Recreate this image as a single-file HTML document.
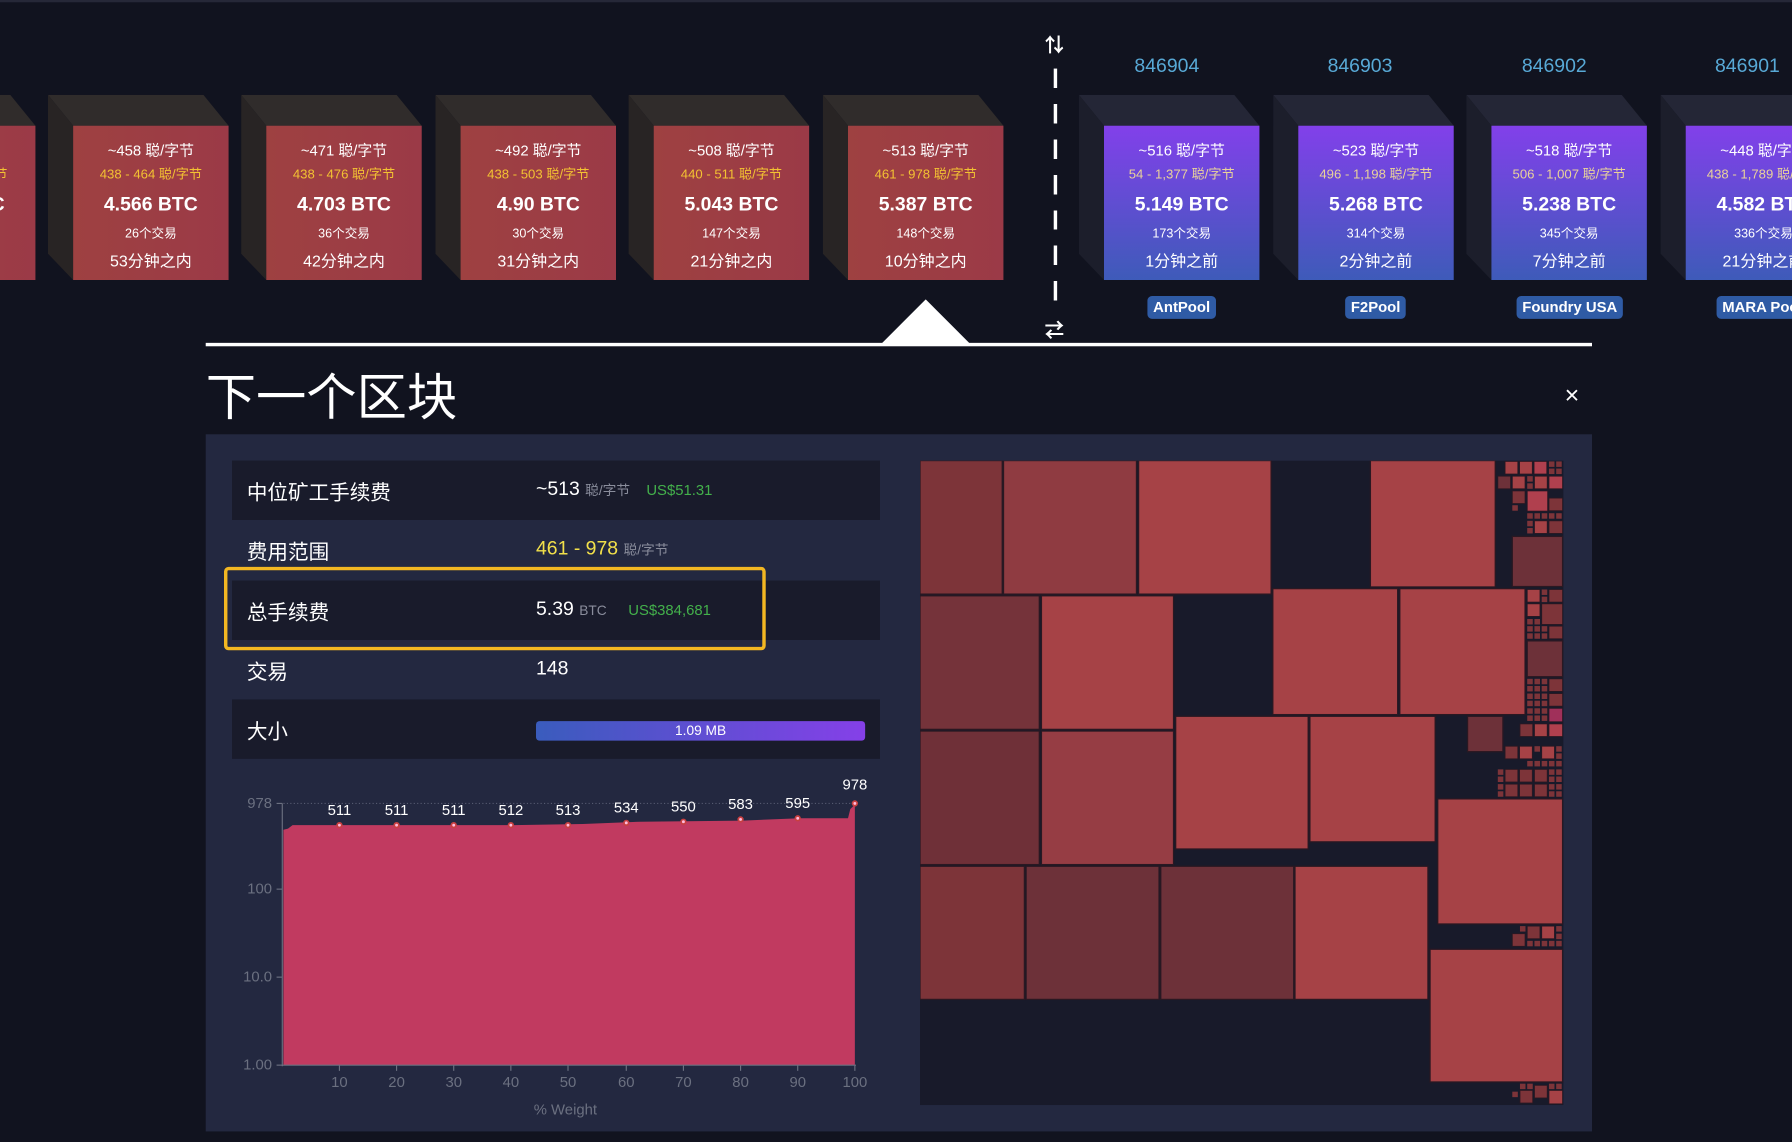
<!DOCTYPE html>
<html><head><meta charset="utf-8">
<style>
html,body{margin:0;padding:0;background:#11131f;overflow:hidden;width:1792px;height:1141px}
#w{position:absolute;left:0;top:0;width:1568px;height:999px;overflow:hidden;transform:scale(1.142857);transform-origin:0 0;font-family:"Liberation Sans","Noto Sans CJK SC",sans-serif;color:#fff}
.a{position:absolute}
.blk{position:absolute;top:83px;width:160px;height:165px}
.blk svg{position:absolute;left:0;top:0}
.face{position:absolute;left:22px;top:27px;width:136px;height:135px;text-align:center}
.red .face{background:linear-gradient(90deg,#9e4141,#9b3a47)}
.pur .face{background:linear-gradient(180deg,#8240ea,#3e5bb9)}
.l1{position:absolute;left:0;right:0;top:11px;font-size:13px;white-space:nowrap}
.l2{position:absolute;left:0;right:0;top:34px;font-size:11.5px;color:#f3c232;white-space:nowrap}
.pur .l2{color:#e9d29a}
.l3{position:absolute;left:0;right:0;top:59px;font-size:17px;font-weight:bold;white-space:nowrap}
.l4{position:absolute;left:0;right:0;top:86px;font-size:11px}
.l5{position:absolute;left:0;right:0;top:108px;font-size:14px;white-space:nowrap}
.h{position:absolute;top:48px;width:136px;text-align:center;font-size:17px;color:#58a9d6}
.pool{position:absolute;top:259px;height:20px;line-height:20px;padding:0 5px;background:#2f5ba5;border-radius:4px;font-size:13px;font-weight:bold;white-space:nowrap}
.row{position:absolute;left:203px;width:567px;height:52px}
.row.d{background:#191b2b}
.lab{position:absolute;left:13px;top:14px;font-size:18px}
.val{position:absolute;left:266px;top:15px;font-size:17px;white-space:nowrap}
.u{color:#8a8d9c;font-size:12px}
.g{color:#43b04b;font-size:13px}
.yl{position:absolute;font-size:13px;color:#6b7080;text-align:right;width:40px}
.xl{position:absolute;top:939px;font-size:13px;color:#6b7080;width:30px;text-align:center}
.dl{position:absolute;font-size:13px;color:#fff;width:30px;text-align:center}
</style></head><body>
<div id="w">
<div class="a" style="left:0;top:0;width:1568px;height:2px;background:#262838"></div>

<div class="blk red" style="left:-127px"><svg width="160" height="165"><polygon points="0,0 136,0 158,27 22,27" fill="#302c2b"/><polygon points="0,0 22,27 22,162 0,139" fill="#282424"/></svg>
<div class="face"><div class="l1">~4xx 聪/字节</div><div class="l2">4xx - 4xx 聪/字节</div><div class="l3">4.xxx BTC</div><div class="l4">xx个交易</div><div class="l5">6x分钟之内</div></div></div>

<div class="blk red" style="left:42px"><svg width="160" height="165"><polygon points="0,0 136,0 158,27 22,27" fill="#302c2b"/><polygon points="0,0 22,27 22,162 0,139" fill="#282424"/></svg>
<div class="face"><div class="l1">~458 聪/字节</div><div class="l2">438 - 464 聪/字节</div><div class="l3">4.566 BTC</div><div class="l4">26个交易</div><div class="l5">53分钟之内</div></div></div>

<div class="blk red" style="left:211px"><svg width="160" height="165"><polygon points="0,0 136,0 158,27 22,27" fill="#302c2b"/><polygon points="0,0 22,27 22,162 0,139" fill="#282424"/></svg>
<div class="face"><div class="l1">~471 聪/字节</div><div class="l2">438 - 476 聪/字节</div><div class="l3">4.703 BTC</div><div class="l4">36个交易</div><div class="l5">42分钟之内</div></div></div>

<div class="blk red" style="left:381px"><svg width="160" height="165"><polygon points="0,0 136,0 158,27 22,27" fill="#302c2b"/><polygon points="0,0 22,27 22,162 0,139" fill="#282424"/></svg>
<div class="face"><div class="l1">~492 聪/字节</div><div class="l2">438 - 503 聪/字节</div><div class="l3">4.90 BTC</div><div class="l4">30个交易</div><div class="l5">31分钟之内</div></div></div>

<div class="blk red" style="left:550px"><svg width="160" height="165"><polygon points="0,0 136,0 158,27 22,27" fill="#302c2b"/><polygon points="0,0 22,27 22,162 0,139" fill="#282424"/></svg>
<div class="face"><div class="l1">~508 聪/字节</div><div class="l2">440 - 511 聪/字节</div><div class="l3">5.043 BTC</div><div class="l4">147个交易</div><div class="l5">21分钟之内</div></div></div>

<div class="blk red" style="left:720px"><svg width="160" height="165"><polygon points="0,0 136,0 158,27 22,27" fill="#302c2b"/><polygon points="0,0 22,27 22,162 0,139" fill="#282424"/></svg>
<div class="face"><div class="l1">~513 聪/字节</div><div class="l2">461 - 978 聪/字节</div><div class="l3">5.387 BTC</div><div class="l4">148个交易</div><div class="l5">10分钟之内</div></div></div>

<div class="a" style="left:914px;top:25px;font-size:17px;font-weight:bold">⇅</div>
<div class="a" style="left:922px;top:60px;width:3px;height:212px;background:repeating-linear-gradient(180deg,#fff 0 17px,transparent 17px 31px)"></div>
<div class="a" style="left:914px;top:275px;font-size:17px;font-weight:bold">⇄</div>

<div class="h" style="left:953px">846904</div>
<div class="h" style="left:1122px">846903</div>
<div class="h" style="left:1292px">846902</div>
<div class="h" style="left:1461px">846901</div>

<div class="blk pur" style="left:944px"><svg width="160" height="165"><polygon points="0,0 136,0 158,27 22,27" fill="#242636"/><polygon points="0,0 22,27 22,162 0,139" fill="#1c1e2b"/></svg>
<div class="face"><div class="l1">~516 聪/字节</div><div class="l2">54 - 1,377 聪/字节</div><div class="l3">5.149 BTC</div><div class="l4">173个交易</div><div class="l5">1分钟之前</div></div></div>
<div class="blk pur" style="left:1114px"><svg width="160" height="165"><polygon points="0,0 136,0 158,27 22,27" fill="#242636"/><polygon points="0,0 22,27 22,162 0,139" fill="#1c1e2b"/></svg>
<div class="face"><div class="l1">~523 聪/字节</div><div class="l2">496 - 1,198 聪/字节</div><div class="l3">5.268 BTC</div><div class="l4">314个交易</div><div class="l5">2分钟之前</div></div></div>
<div class="blk pur" style="left:1283px"><svg width="160" height="165"><polygon points="0,0 136,0 158,27 22,27" fill="#242636"/><polygon points="0,0 22,27 22,162 0,139" fill="#1c1e2b"/></svg>
<div class="face"><div class="l1">~518 聪/字节</div><div class="l2">506 - 1,007 聪/字节</div><div class="l3">5.238 BTC</div><div class="l4">345个交易</div><div class="l5">7分钟之前</div></div></div>
<div class="blk pur" style="left:1453px"><svg width="160" height="165"><polygon points="0,0 136,0 158,27 22,27" fill="#242636"/><polygon points="0,0 22,27 22,162 0,139" fill="#1c1e2b"/></svg>
<div class="face"><div class="l1">~448 聪/字节</div><div class="l2">438 - 1,789 聪/字节</div><div class="l3">4.582 BTC</div><div class="l4">336个交易</div><div class="l5">21分钟之前</div></div></div>

<div class="pool" style="left:1004px">AntPool</div>
<div class="pool" style="left:1177px">F2Pool</div>
<div class="pool" style="left:1327px">Foundry USA</div>
<div class="pool" style="left:1502px">MARA Pool</div>

<div class="a" style="left:180px;top:300px;width:1213px;height:3px;background:#fff"></div>
<svg class="a" style="left:770px;top:262px" width="80" height="40"><polygon points="40,0 79,39 1,39" fill="#fff"/></svg>

<div class="a" style="left:180px;top:322px;font-size:44px;line-height:54px">下一个区块</div>
<div class="a" style="left:1369px;top:333px;font-size:22px;color:#fff">×</div>

<div class="a" style="left:180px;top:380px;width:1213px;height:610px;background:#232840"></div>

<div class="row d" style="top:403px"><div class="lab">中位矿工手续费</div><div class="val">~513 <span class="u">聪/字节</span> &nbsp; <span class="g">US$51.31</span></div></div>
<div class="row" style="top:455px"><div class="lab">费用范围</div><div class="val"><span style="color:#f2e04a">461 - 978</span> <span class="u">聪/字节</span></div></div>
<div class="row d" style="top:508px"><div class="lab">总手续费</div><div class="val">5.39 <span class="u">BTC</span> &nbsp; &nbsp;<span class="g">US$384,681</span></div></div>
<div class="row" style="top:560px"><div class="lab">交易</div><div class="val">148</div></div>
<div class="row d" style="top:612px"><div class="lab">大小</div>
<div class="a" style="left:266px;top:19px;width:288px;height:17px;border-radius:3px;background:linear-gradient(90deg,#3a5cbd,#8540e8);font-size:12px;line-height:17px;text-align:center">1.09 MB</div></div>
<div class="a" style="left:196px;top:496px;width:468px;height:67px;border:3px solid #f3b722;border-radius:4px"></div>

<svg class="a" style="left:0;top:0" width="800" height="1000">
<line x1="248" y1="703" x2="748" y2="703" stroke="#555a70" stroke-dasharray="1,2"/>
<path d="M248,932 L248,726 L252,725 L256,722 L300,722 L450,722 L510,721 L560,719 L650,718 L700,716 L742,716 L744,708 L748,704 L748,932 Z" fill="#c13a60"/>
<line x1="247" y1="703" x2="247" y2="933" stroke="#6b7080"/>
<line x1="247" y1="932" x2="749" y2="932" stroke="#6b7080"/>
<g stroke="#6b7080"><line x1="242" y1="703" x2="247" y2="703"/><line x1="242" y1="778" x2="247" y2="778"/><line x1="242" y1="855" x2="247" y2="855"/><line x1="242" y1="932" x2="247" y2="932"/>
<line x1="297" y1="932" x2="297" y2="937"/><line x1="347" y1="932" x2="347" y2="937"/><line x1="397" y1="932" x2="397" y2="937"/><line x1="447" y1="932" x2="447" y2="937"/><line x1="497" y1="932" x2="497" y2="937"/><line x1="548" y1="932" x2="548" y2="937"/><line x1="598" y1="932" x2="598" y2="937"/><line x1="648" y1="932" x2="648" y2="937"/><line x1="698" y1="932" x2="698" y2="937"/><line x1="748" y1="932" x2="748" y2="937"/></g>
<g fill="#fbd" stroke="#c84040" stroke-width="1.5"><circle cx="297" cy="722" r="2"/><circle cx="347" cy="722" r="2"/><circle cx="397" cy="722" r="2"/><circle cx="447" cy="722" r="2"/><circle cx="497" cy="722" r="2"/><circle cx="548" cy="720" r="2"/><circle cx="598" cy="719" r="2"/><circle cx="648" cy="717" r="2"/><circle cx="698" cy="716" r="2"/><circle cx="748" cy="703" r="2"/></g>
</svg>
<div class="yl" style="left:198px;top:695px">978</div>
<div class="yl" style="left:198px;top:770px">100</div>
<div class="yl" style="left:198px;top:847px">10.0</div>
<div class="yl" style="left:198px;top:924px">1.00</div>
<div class="xl" style="left:282px">10</div><div class="xl" style="left:332px">20</div><div class="xl" style="left:382px">30</div><div class="xl" style="left:432px">40</div><div class="xl" style="left:482px">50</div><div class="xl" style="left:533px">60</div><div class="xl" style="left:583px">70</div><div class="xl" style="left:633px">80</div><div class="xl" style="left:683px">90</div><div class="xl" style="left:733px">100</div>
<div class="a" style="left:467px;top:963px;font-size:13px;color:#6b7080">% Weight</div>
<div class="dl" style="left:282px;top:701px">511</div><div class="dl" style="left:332px;top:701px">511</div><div class="dl" style="left:382px;top:701px">511</div><div class="dl" style="left:432px;top:701px">512</div><div class="dl" style="left:482px;top:701px">513</div><div class="dl" style="left:533px;top:699px">534</div><div class="dl" style="left:583px;top:698px">550</div><div class="dl" style="left:633px;top:696px">583</div><div class="dl" style="left:683px;top:695px">595</div><div class="dl" style="left:733px;top:679px">978</div>

<svg class="a" style="left:805px;top:403px" width="563" height="564" viewBox="22 27 1510 1530" preserveAspectRatio="none">
<rect x="22" y="27" width="1510" height="1530" fill="#181a2a"/>
<g stroke="#2a1822" stroke-width="3">
<rect x="22" y="27" width="193" height="317" fill="#7d3439"/>
<rect x="218" y="27" width="312" height="317" fill="#8f3b41"/>
<rect x="535" y="27" width="311" height="317" fill="#a64246"/>
<rect x="1079" y="27" width="293" height="300" fill="#a64246"/>
<rect x="22" y="348" width="280" height="317" fill="#75333a"/>
<rect x="307" y="348" width="310" height="317" fill="#a64246"/>
<rect x="850" y="331" width="293" height="299" fill="#a64246"/>
<rect x="1148" y="331" width="294" height="299" fill="#a64246"/>
<rect x="22" y="669" width="280" height="317" fill="#6f3038"/>
<rect x="307" y="669" width="310" height="317" fill="#963d44"/>
<rect x="622" y="634" width="311" height="315" fill="#a64246"/>
<rect x="937" y="634" width="294" height="298" fill="#a64246"/>
<rect x="1237" y="830" width="293" height="297" fill="#a64246"/>
<rect x="22" y="990" width="245" height="316" fill="#7d3439"/>
<rect x="271" y="990" width="312" height="316" fill="#6d3139"/>
<rect x="587" y="990" width="312" height="316" fill="#6d3139"/>
<rect x="902" y="990" width="312" height="316" fill="#a64246"/>
<rect x="1219" y="1187" width="311" height="315" fill="#a64246"/>
<rect x="1412" y="207" width="118" height="119" fill="#6d3139"/>
<rect x="1307" y="634" width="83" height="84" fill="#6d3139"/>
<rect x="1447" y="455" width="83" height="85" fill="#6d3139"/>
</g>
<g stroke="#2a1822" stroke-width="2">
<rect x="1395" y="29" width="30" height="30" fill="#a64246"/><rect x="1429" y="29" width="30" height="30" fill="#a64246"/><rect x="1463" y="29" width="30" height="30" fill="#b0404e"/>
<rect x="1378" y="64" width="30" height="30" fill="#6d3139"/><rect x="1412" y="64" width="30" height="30" fill="#a64246"/><rect x="1464" y="64" width="30" height="30" fill="#a64246"/><rect x="1498" y="64" width="32" height="30" fill="#b0404e"/>
<rect x="1412" y="99" width="30" height="30" fill="#7d3439"/><rect x="1447" y="99" width="48" height="48" fill="#b0404e"/><rect x="1498" y="116" width="32" height="30" fill="#7d3439"/>
<rect x="1464" y="170" width="30" height="30" fill="#a64246"/><rect x="1498" y="170" width="32" height="30" fill="#7d3439"/>
<rect x="1447" y="333" width="30" height="30" fill="#a64246"/><rect x="1498" y="333" width="32" height="30" fill="#7d3439"/>
<rect x="1447" y="367" width="30" height="30" fill="#a64246"/><rect x="1481" y="367" width="49" height="49" fill="#7d3439"/>
<rect x="1498" y="420" width="32" height="30" fill="#7d3439"/>
<rect x="1498" y="545" width="32" height="30" fill="#7d3439"/><rect x="1498" y="580" width="32" height="30" fill="#7d3439"/><rect x="1498" y="615" width="32" height="32" fill="#a0305a"/>
<rect x="1430" y="652" width="30" height="30" fill="#7d3439"/><rect x="1464" y="652" width="30" height="30" fill="#a64246"/><rect x="1498" y="652" width="32" height="30" fill="#b0404e"/>
<rect x="1395" y="705" width="30" height="30" fill="#7d3439"/><rect x="1429" y="705" width="30" height="30" fill="#a64246"/><rect x="1481" y="705" width="30" height="30" fill="#a64246"/>
<rect x="1395" y="760" width="30" height="30" fill="#7d3439"/><rect x="1429" y="760" width="30" height="30" fill="#7d3439"/><rect x="1464" y="760" width="30" height="30" fill="#7d3439"/>
<rect x="1395" y="795" width="30" height="30" fill="#7d3439"/><rect x="1429" y="795" width="30" height="30" fill="#7d3439"/><rect x="1464" y="795" width="30" height="30" fill="#7d3439"/>
<rect x="1447" y="1132" width="30" height="30" fill="#7d3439"/><rect x="1481" y="1132" width="30" height="30" fill="#a64246"/><rect x="1412" y="1150" width="30" height="30" fill="#7d3439"/>
<rect x="1430" y="1522" width="30" height="30" fill="#7d3439"/><rect x="1464" y="1510" width="30" height="30" fill="#7d3439"/><rect x="1498" y="1522" width="32" height="32" fill="#a64246"/>
</g>
<g fill="#7d3439">
<rect x="1498" y="29" width="13" height="13"/><rect x="1515" y="29" width="13" height="13"/><rect x="1498" y="46" width="13" height="13"/><rect x="1515" y="46" width="13" height="13"/>
<rect x="1447" y="64" width="13" height="13"/><rect x="1447" y="81" width="13" height="13"/><rect x="1412" y="133" width="13" height="13"/>
<rect x="1447" y="152" width="13" height="13"/><rect x="1464" y="152" width="13" height="13"/><rect x="1481" y="152" width="13" height="13"/><rect x="1498" y="152" width="13" height="13"/><rect x="1515" y="152" width="13" height="13"/>
<rect x="1447" y="170" width="13" height="13"/><rect x="1447" y="187" width="13" height="13"/>
<rect x="1481" y="333" width="13" height="13"/><rect x="1481" y="350" width="13" height="13"/>
<rect x="1447" y="403" width="13" height="13"/><rect x="1464" y="403" width="13" height="13"/>
<rect x="1447" y="420" width="13" height="13"/><rect x="1464" y="420" width="13" height="13"/><rect x="1481" y="420" width="13" height="13"/>
<rect x="1447" y="437" width="13" height="13"/><rect x="1464" y="437" width="13" height="13"/><rect x="1481" y="437" width="13" height="13"/>
<rect x="1447" y="545" width="13" height="13"/><rect x="1464" y="545" width="13" height="13"/><rect x="1481" y="545" width="13" height="13"/>
<rect x="1447" y="562" width="13" height="13"/><rect x="1464" y="562" width="13" height="13"/><rect x="1481" y="562" width="13" height="13"/>
<rect x="1447" y="580" width="13" height="13"/><rect x="1464" y="580" width="13" height="13"/><rect x="1481" y="580" width="13" height="13"/>
<rect x="1447" y="597" width="13" height="13"/><rect x="1464" y="597" width="13" height="13"/><rect x="1481" y="597" width="13" height="13"/>
<rect x="1447" y="615" width="13" height="13"/><rect x="1464" y="615" width="13" height="13"/><rect x="1481" y="615" width="13" height="13"/>
<rect x="1447" y="632" width="13" height="13"/><rect x="1464" y="632" width="13" height="13"/><rect x="1481" y="632" width="13" height="13"/>
<rect x="1464" y="705" width="13" height="13"/><rect x="1515" y="705" width="13" height="13"/><rect x="1515" y="722" width="13" height="13"/>
<rect x="1447" y="740" width="13" height="13"/><rect x="1464" y="740" width="13" height="13"/><rect x="1481" y="740" width="13" height="13"/><rect x="1498" y="740" width="13" height="13"/><rect x="1515" y="740" width="13" height="13"/>
<rect x="1378" y="760" width="13" height="13"/><rect x="1498" y="760" width="13" height="13"/><rect x="1515" y="760" width="13" height="13"/>
<rect x="1378" y="777" width="13" height="13"/><rect x="1498" y="777" width="13" height="13"/><rect x="1515" y="777" width="13" height="13"/>
<rect x="1378" y="795" width="13" height="13"/><rect x="1498" y="795" width="13" height="13"/><rect x="1515" y="795" width="13" height="13"/>
<rect x="1378" y="812" width="13" height="13"/><rect x="1498" y="812" width="13" height="13"/><rect x="1515" y="812" width="13" height="13"/>
<rect x="1430" y="1132" width="13" height="13"/><rect x="1515" y="1132" width="13" height="13"/><rect x="1515" y="1150" width="13" height="13"/>
<rect x="1447" y="1167" width="13" height="13"/><rect x="1464" y="1167" width="13" height="13"/><rect x="1481" y="1167" width="13" height="13"/><rect x="1498" y="1167" width="13" height="13"/><rect x="1515" y="1167" width="13" height="13"/>
<rect x="1430" y="1506" width="13" height="13"/><rect x="1447" y="1506" width="13" height="13"/><rect x="1498" y="1506" width="13" height="13"/><rect x="1515" y="1506" width="13" height="13"/><rect x="1412" y="1525" width="13" height="13"/>
</g>
</svg>
</div>
</body></html>
